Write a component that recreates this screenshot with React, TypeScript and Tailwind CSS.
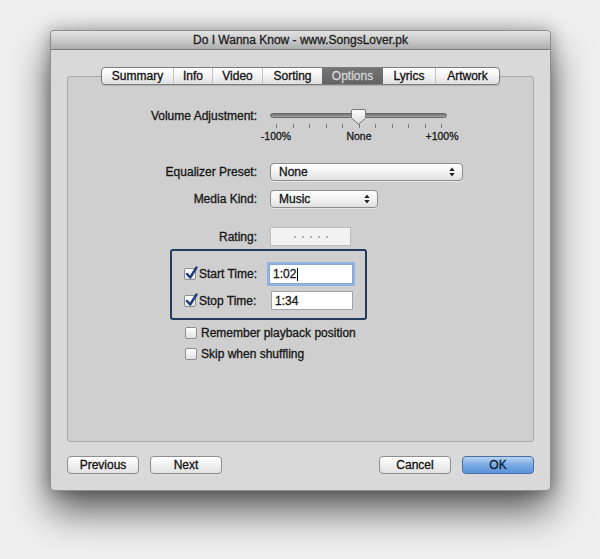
import React from "react";

const font = { fontFamily: '"Liberation Sans", Arial, sans-serif' };

function Check({ checked }: { checked: boolean }) {
  return (
    <div className="relative w-[12px] h-[12px] rounded-[2px] border border-[#8e8e8e] bg-gradient-to-b from-[#ffffff] to-[#e2e2e2] shrink-0">
      {checked && (
        <svg className="absolute left-[0px] top-[-3px]" width="13" height="14" viewBox="0 0 13 14">
          <path d="M2 8 L5.2 11.5 L11.5 1.5" fill="none" stroke="#203d7a" strokeWidth="2.4" strokeLinecap="round" strokeLinejoin="round" />
        </svg>
      )}
    </div>
  );
}

function UpDown() {
  return (
    <svg width="6" height="10" viewBox="0 0 6 10" className="shrink-0">
      <path d="M3 0.5 L5.7 4 L0.3 4 Z" fill="#222" />
      <path d="M3 9.5 L5.7 6 L0.3 6 Z" fill="#222" />
    </svg>
  );
}

function Popup({ w, text }: { w: string; text: string }) {
  return (
    <div className={`${w} h-[18px] rounded-[4px] border border-[#8c8c8c] bg-gradient-to-b from-[#ffffff] via-[#f2f2f2] to-[#e0e0e0] flex items-center justify-between pl-[8px] pr-[7px] text-[12px] text-[#111] shadow-[0_1px_0_rgba(255,255,255,0.5)]`}>
      <span>{text}</span>
      <UpDown />
    </div>
  );
}

function Btn({ children, blue }: { children: React.ReactNode; blue?: boolean }) {
  return (
    <div
      className={
        blue
          ? "w-[72px] h-[18px] rounded-[4px] border border-[#4a6da3] bg-gradient-to-b from-[#b9d4f3] via-[#79a9e4] to-[#5b92db] flex items-center justify-center text-[12px] text-[#0b1a33]"
          : "w-[72px] h-[18px] rounded-[4px] border border-[#8d8d8d] bg-gradient-to-b from-[#ffffff] via-[#f0f0f0] to-[#e2e2e2] flex items-center justify-center text-[12px] text-[#111]"
      }
    >
      {children}
    </div>
  );
}

const tabs = [
  { t: "Summary", w: "w-[71px]" },
  { t: "Info", w: "w-[39px]" },
  { t: "Video", w: "w-[50px]" },
  { t: "Sorting", w: "w-[60px]" },
  { t: "Options", w: "w-[61px]", sel: true },
  { t: "Lyrics", w: "w-[52px]" },
  { t: "Artwork", w: "w-[64px]" },
];

export default function App() {
  return (
    <div className="w-[600px] h-[559px] bg-[#efefef] pt-[30px] pl-[50px] overflow-hidden [-webkit-text-stroke:0.3px]" style={font}>
      <div className="w-[501px] h-[461px] rounded-[4px] bg-[#d9d9d9] border border-[#8f8f8f] flex flex-col shadow-[0_20px_38px_rgba(0,0,0,0.62),0_0_16px_rgba(0,0,0,0.3)]">
        {/* title bar */}
        <div className="h-[19px] rounded-t-[4px] bg-gradient-to-b from-[#e3e3e3] via-[#cbcbcb] to-[#adadad] border-b border-[#7d7d7d] text-center text-[12px] leading-[19px] text-[#1c1c1c]">
          Do I Wanna Know - www.SongsLover.pk
        </div>

        <div className="flex flex-col px-[16px] pt-[17px]">
          {/* tabs */}
          <div className="relative z-10 flex justify-center -mb-[9px]">
            <div className="flex h-[18px] rounded-[4px] border border-[#7c7c7c] bg-gradient-to-b from-[#ffffff] via-[#f3f3f3] to-[#dedede] overflow-hidden shadow-[0_1px_1px_rgba(0,0,0,0.15)]">
              {tabs.map((tab, i) => (
                <div
                  key={tab.t}
                  className={`${tab.w} h-full flex items-center justify-center text-[12px] ${
                    tab.sel
                      ? "bg-gradient-to-b from-[#747474] to-[#636363] text-[#d6d6d6]"
                      : "text-[#111]"
                  } ${i > 0 && !tab.sel && !tabs[i - 1].sel ? "border-l border-[#c4c4c4]" : ""}`}
                >
                  {tab.t}
                </div>
              ))}
            </div>
          </div>

          {/* content box */}
          <div className="h-[366px] rounded-[3px] border border-[#a9a9a9] bg-[#cfcfcf] flex flex-col pt-[31px] text-[12px] text-[#161616]">
            {/* volume */}
            <div className="flex h-[34px]">
              <div className="w-[189px] text-right leading-[16px]">Volume Adjustment:</div>
              <div className="ml-[13px] flex flex-col w-[180px]">
                <div className="relative h-[16px] flex items-center">
                  <div className="w-[177px] h-[5px] rounded-full bg-gradient-to-b from-[#6e6e6e] to-[#a8a8a8] border border-[#6a6a6a]" />
                  <svg className="absolute left-[81px] top-[1px]" width="15" height="16" viewBox="0 0 15 16">
                    <defs>
                      <linearGradient id="th" x1="0" y1="0" x2="0" y2="1">
                        <stop offset="0" stopColor="#ffffff" />
                        <stop offset="1" stopColor="#d8d8d8" />
                      </linearGradient>
                    </defs>
                    <path d="M2 0.5 H13 Q14.5 0.5 14.5 2 V9 L7.5 15.3 L0.5 9 V2 Q0.5 0.5 2 0.5 Z" fill="url(#th)" stroke="#777" strokeWidth="1" />
                  </svg>
                </div>
                <div className="ml-[6px] w-[166px] h-[5px] mt-[1px] flex justify-between">
                  {Array.from({ length: 11 }).map((_, i) => (
                    <div key={i} className="w-[1px] h-[4px] bg-[#7a7a7a]" />
                  ))}
                </div>
                <div className="ml-[-14px] w-[206px] flex justify-between text-[10.5px] leading-[12px] mt-[1px] text-[#1a1a1a]">
                  <span className="w-[40px] text-center">-100%</span>
                  <span className="w-[40px] text-center">None</span>
                  <span className="w-[40px] text-center">+100%</span>
                </div>
              </div>
            </div>

            {/* EQ */}
            <div className="flex items-center h-[18px] mt-[21px]">
              <div className="w-[189px] text-right">Equalizer Preset:</div>
              <div className="ml-[13px]">
                <Popup w="w-[193px]" text="None" />
              </div>
            </div>

            {/* Media */}
            <div className="flex items-center h-[18px] mt-[9px]">
              <div className="w-[189px] text-right">Media Kind:</div>
              <div className="ml-[13px]">
                <Popup w="w-[108px]" text="Music" />
              </div>
            </div>

            {/* Rating */}
            <div className="flex items-center h-[19px] mt-[19px]">
              <div className="w-[189px] text-right">Rating:</div>
              <div className="ml-[13px] w-[81px] h-[19px] bg-[#f2f2f2] border border-[#bdbdbd] flex items-center justify-center gap-[6px]">
                {Array.from({ length: 5 }).map((_, i) => (
                  <div key={i} className="w-[2px] h-[2px] rounded-full bg-[#9a9a9a]" />
                ))}
              </div>
            </div>

            {/* highlight box */}
            <div className="mt-[3px] ml-[102px] w-[197px] h-[71px] rounded-[3px] border-[2.5px] border-[#223a5e] flex flex-col pt-[13px] pl-[12px]">
              <div className="flex items-center h-[20px]">
                <Check checked />
                <span className="ml-[3px] w-[70px]">Start Time:</span>
                <div className="w-[84px] h-[20px] bg-white border border-[#8aa9d2] shadow-[0_0_0_2px_#8fb4e3] flex items-center pl-[3px] text-[12px]">
                  1:02<span className="w-[1px] h-[13px] bg-black ml-[1px]" />
                </div>
              </div>
              <div className="flex items-center h-[19px] mt-[7px]">
                <Check checked />
                <span className="ml-[3px] w-[72px]">Stop Time:</span>
                <div className="w-[82px] h-[19px] bg-white border border-[#a3a3a3] flex items-center pl-[3px] text-[12px]">
                  1:34
                </div>
              </div>
            </div>

            <div className="flex items-center h-[16px] mt-[5px] ml-[117px]">
              <Check checked={false} />
              <span className="ml-[4px]">Remember playback position</span>
            </div>
            <div className="flex items-center h-[16px] mt-[5px] ml-[117px]">
              <Check checked={false} />
              <span className="ml-[4px]">Skip when shuffling</span>
            </div>
          </div>

          {/* buttons */}
          <div className="flex mt-[14px]">
            <Btn>Previous</Btn>
            <div className="ml-[11px]">
              <Btn>Next</Btn>
            </div>
            <div className="ml-auto">
              <Btn>Cancel</Btn>
            </div>
            <div className="ml-[11px]">
              <Btn blue>OK</Btn>
            </div>
          </div>
        </div>
      </div>
    </div>
  );
}
